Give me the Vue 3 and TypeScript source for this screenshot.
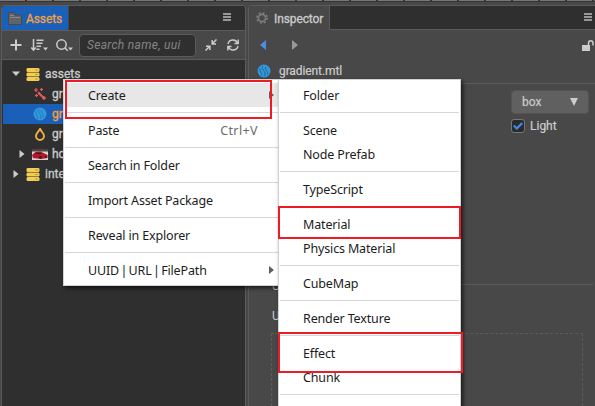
<script setup lang="ts">
interface MenuItem {
  label: string
  shortcut?: string
  submenu?: boolean
  active?: boolean
  tight?: boolean
}

const contextMenu: MenuItem[][] = [
  [{ label: 'Create', submenu: true, active: true }],
  [{ label: 'Paste', shortcut: 'Ctrl+V' }],
  [{ label: 'Search in Folder' }],
  [{ label: 'Import Asset Package' }],
  [{ label: 'Reveal in Explorer' }],
  [{ label: 'UUID | URL | FilePath', submenu: true, tight: true }],
]

const createMenu: MenuItem[][] = [
  [{ label: 'Folder' }],
  [{ label: 'Scene' }, { label: 'Node Prefab' }],
  [{ label: 'TypeScript' }],
  [{ label: 'Material' }, { label: 'Physics Material' }],
  [{ label: 'CubeMap' }],
  [{ label: 'Render Texture' }],
  [{ label: 'Effect' }, { label: 'Chunk' }],
  [{ label: '' }],
]

interface TreeRow {
  label: string
  icon: 'db' | 'wand' | 'material' | 'flame' | 'car'
  depth: number
  arrow?: 'open' | 'closed'
  selected?: boolean
}

const tree: TreeRow[] = [
  { label: 'assets', icon: 'db', depth: 0, arrow: 'open' },
  { label: 'gr', icon: 'wand', depth: 1 },
  { label: 'gr', icon: 'material', depth: 1, selected: true },
  { label: 'gr', icon: 'flame', depth: 1 },
  { label: 'ho', icon: 'car', depth: 1, arrow: 'closed' },
  { label: 'inte', icon: 'db', depth: 0, arrow: 'closed' },
]
</script>

<template>
  <div class="editor">
    <div class="strip"><i v-for="n in 23" :key="n"></i></div>
    <div class="panels">
      <section class="panel assets">
        <header class="tabs">
          <div class="tab current">
            <svg width="14" height="13" viewBox="0 0 14 13"><path d="M.5 12.500V.5h5l1.500 2.500h6.500v9.500z" fill="#5f6468" stroke="#474b4f" /><path d="M2 3.500h4M2 5.500h10" stroke="#85888b" /></svg>
            <span>Assets</span>
          </div>
          <svg class="burger" width="8" height="8" viewBox="0 0 8 8"><path d="M0 1h8M0 4h8M0 7h8" stroke="#bcbcbc" stroke-width="1.700" /></svg>
        </header>
        <div class="toolbar">
          <svg width="12" height="12" viewBox="0 0 12 12"><path d="M6 .5v11M.5 6h11" stroke="#ccc" stroke-width="2" /></svg>
          <svg class="sort" width="18" height="13" viewBox="0 0 18 13" fill="none" stroke="#ccc" stroke-width="1.500"><path d="M2.500 0v11M.2 8.500l2.300 2.600 2.300-2.600M5.500 1.200h7M5.500 4.200h6M5.500 7.200h4.500M5.500 10.200h3" /><path d="M12 8.500h5l-2.500 3z" fill="#ccc" stroke="none" /></svg>
          <svg class="find" width="18" height="13" viewBox="0 0 18 13" fill="none" stroke="#ccc" stroke-width="1.500"><circle cx="5.500" cy="5.500" r="4.700" /><path d="M8.700 8.700l3 3" /><path d="M12 8.500h5l-2.500 3z" fill="#ccc" stroke="none" /></svg>
          <div class="search">Search name, uui</div>
          <svg class="collapse" width="12" height="12" viewBox="0 0 12 12" fill="none" stroke="#ccc" stroke-width="1.500"><path d="M11.500.5l-4 4M7.200 1v4H11M.5 11.500l4-4M1 7.200h3.900V11" /></svg>
          <svg class="refresh" width="12" height="12" viewBox="0 0 12 12" fill="none" stroke="#ccc" stroke-width="1.400"><path d="M1 5a5 5 0 0 1 9.500-1M11 7a5 5 0 0 1-9.500 1M11.200.5V4.500H7.500M.8 11.500V7.500h3.700" /></svg>
        </div>
        <div class="tree">
          <div v-for="(row, i) in tree" :key="i" class="row" :class="['depth' + row.depth, { selected: row.selected }]">
            <span class="arrow">
              <svg v-if="row.arrow === 'open'" width="8" height="8" viewBox="0 0 8 8"><path d="M0 1.500h8L4 6z" fill="#ccc" /></svg>
              <svg v-else-if="row.arrow" width="8" height="8" viewBox="0 0 8 8"><path d="M1.500 0v8L6.500 4z" fill="#ccc" /></svg>
            </span>
            <svg v-if="row.icon === 'db'" class="icon" width="14" height="13" viewBox="0 0 14 13"><path d="M1.500 0h11l1 .8v2.400l-1 .8h-11l-1-.8V.8zM1.500 4.600h11l1 .8v2.300l-1 .8h-11l-1-.8V5.400zM1.500 9.100h11l1 .8v2.300l-1 .8h-11l-1-.8V9.900z" fill="#f2cd52" /><path d="M9.500 2h2M9.500 6.500h2M9.500 11h2" stroke="#a98925" /></svg>
            <svg v-else-if="row.icon === 'wand'" class="icon" width="14" height="14" viewBox="0 0 14 14" fill="none" stroke="#e45d5b"><path d="M6 6.500l5 4.500" stroke-width="2" /><circle cx="11" cy="11" r="1.800" fill="#e45d5b" stroke="none" /><path d="M3 1v4M1 3h4M8.500 1v3M7 2.500h3M5 5l2.500 2M3.500 7v3M2 8.500h3M5 7l2-1.500" stroke-width="1.200" /></svg>
            <svg v-else-if="row.icon === 'material'" class="icon" width="14" height="14" viewBox="0 0 14 14"><circle cx="7" cy="7" r="6.500" fill="#3397dc" /><path d="M6 2c-3 3.500 4 5 1.500 10M8.800 3c-1.500 3 3 4 1.500 7.500M3 4.500c-1 3.500 2.200 4 1.800 7" fill="none" stroke="#2475bd" stroke-width=".9" /></svg>
            <svg v-else-if="row.icon === 'flame'" class="icon" width="14" height="14" viewBox="0 0 14 14"><path d="M7 1.200C6.800 4 3 5.500 3 9a4 4 0 0 0 8 0C11 6 8 5 7 1.200z" fill="none" stroke="#efad47" stroke-width="1.900" /></svg>
            <svg v-else class="icon car" width="16" height="11" viewBox="0 0 16 11"><path d="M0 0h16v11H0z" fill="#d9d0ce" /><path d="M0 0h16v2.500H0z" fill="#4c4442" /><path d="M0 6l3.500-3 5-.5 4 2 3 1.500v3L9 10 1 9z" fill="#b51528" /><path d="M4 3.800h4.500l2 1.200H3z" fill="#3a2027" /><circle cx="8.500" cy="8.300" r="1.400" fill="#3b1820" /><circle cx="14" cy="7.800" r="1.100" fill="#3b1820" /></svg>
            <span>{{ row.label }}</span>
          </div>
        </div>
      </section>

      <section class="panel inspector">
        <header class="tabs">
          <div class="tab">
            <svg width="12" height="12" viewBox="0 0 12 12" fill="none" stroke="#7c7c7c"><circle cx="6" cy="6" r="3.600" stroke-width="1.600" /><circle cx="6" cy="6" r="5.100" stroke-width="1.600" stroke-dasharray="2 2" /></svg>
            <span>Inspector</span>
          </div>
          <div class="rest"><svg class="burger" width="8" height="8" viewBox="0 0 8 8"><path d="M0 1h8M0 4h8M0 7h8" stroke="#bcbcbc" stroke-width="1.700" /></svg></div>
        </header>
        <div class="history">
          <svg width="6" height="10" viewBox="0 0 6 10"><path d="M6 0v10L0 5z" fill="#4a8fe4" /></svg>
          <svg class="next" width="6" height="10" viewBox="0 0 6 10"><path d="M0 0v10l6-5z" fill="#999" /></svg>
          <svg class="lock" width="12" height="11" viewBox="0 0 12 11"><path d="M0 5h8v6H0z" fill="#ccc" /><path d="M6.500 5V3a2.200 2.200 0 0 1 4.500 0v2.500" fill="none" stroke="#ccc" stroke-width="1.500" /></svg>
        </div>
        <div class="file">
          <svg width="14" height="14" viewBox="0 0 14 14"><circle cx="7" cy="7" r="6.500" fill="#3397dc" /><path d="M6 2c-3 3.500 4 5 1.500 10M8.800 3c-1.500 3 3 4 1.500 7.500M3 4.500c-1 3.500 2.200 4 1.800 7" fill="none" stroke="#285f91" /></svg>
          <span>gradient.mtl</span>
        </div>
        <div class="preview">
          <div class="select"><span>box</span><svg width="8" height="8" viewBox="0 0 8 8"><path d="M0 0h8L4 8z" fill="#ccc" /></svg></div>
          <div class="check">
            <span class="box"><svg width="10" height="8" viewBox="0 0 10 8"><path d="M.8 3.500l3 3L9.200 1" fill="none" stroke="#4287ee" stroke-width="2.200" /></svg></span>
            <span>Light</span>
          </div>
        </div>
        <div class="section">U</div>
        <div class="section texture">U</div>
        <div class="dropzone"></div>
      </section>
    </div>

    <nav class="menu context">
      <div v-for="(group, g) in contextMenu" :key="g" class="group">
        <div v-for="item in group" :key="item.label" class="item" :class="{ active: item.active, tight: item.tight }">
          <span>{{ item.label }}</span>
          <span v-if="item.shortcut" class="shortcut">{{ item.shortcut }}</span>
          <svg v-if="item.submenu" width="5" height="8" viewBox="0 0 5 8"><path d="M0 0v8l5-4z" fill="#606060" /></svg>
        </div>
      </div>
    </nav>
    <nav class="menu create">
      <div v-for="(group, g) in createMenu" :key="g" class="group">
        <div v-for="item in group" :key="item.label" class="item"><span>{{ item.label }}</span></div>
      </div>
    </nav>
    <div class="mark mark-create"></div>
    <div class="mark mark-material"></div>
    <div class="mark mark-effect"></div>
  </div>
</template>

<style>
body { margin: 0; overflow: hidden; background: #484848; }
</style>

<style scoped>
* { box-sizing: border-box; }
svg { display: block; flex: none; }
.editor { position: relative; width: 595px; height: 406px; overflow: hidden; display: flex; flex-direction: column; background: #484848; color: #ccc; font: 12px/20px Roboto, sans-serif; }
.strip { height: 5px; flex: none; display: flex; gap: 2px; border-bottom: 3px solid #484848; background: #353535; }
.strip i { width: 25px; height: 1px; flex: none; background: #777; }
.panels { flex: 1; min-height: 0; display: flex; gap: 2px; padding-left: 1px; }
.panel { border: 1px solid #5b5b5b; border-bottom: 0; border-radius: 4px 4px 0 0; display: flex; flex-direction: column; overflow: hidden; }
.assets { width: 245px; background: #2f2f2f; }
.inspector { flex: 1; border-right: 0; border-top-right-radius: 0; background: #484848; }
.tabs { height: 24px; flex: none; display: flex; align-items: center; background: #2f2f2f; }
.tab { height: 24px; display: flex; align-items: center; letter-spacing: -.1px; -webkit-text-stroke: .3px; padding-top: 1px; }
.tab.current { width: 67px; padding-left: 6px; gap: 4px; background: #1b60b8; color: #f5a13c; border-right: 1px solid #474747; }
.assets .burger { margin: -2px 0 0 154px; }
.toolbar { height: 30px; flex: none; display: flex; align-items: center; background: #484848; border-top: 1px solid #5b5b5b; border-bottom: 1px solid #5b5b5b; padding-left: 8px; }
.sort { margin-left: 9px; }
.find { margin-left: 7px; }
.search { width: 117px; height: 23px; margin-left: 5px; border: 1px solid #5b5b5b; border-radius: 4px; background: #2f2f2f; color: #858585; font-style: italic; line-height: 21px; padding-left: 7px; letter-spacing: .3px; white-space: nowrap; }
.collapse { margin-left: 9px; }
.refresh { margin-left: 10px; }
.tree { padding-top: 4px; }
.row { height: 20px; display: flex; align-items: center; margin-left: 1px; padding-left: 9px; -webkit-text-stroke: .3px; }
.row.depth1 { padding-left: 15px; }
.row.depth1 .arrow { width: 15px; }
.row.selected { background: #1b60b8; color: #f5a13c; }
.arrow { width: 14px; }
.icon { margin-right: 5px; }
.icon.car { margin: 0 4px 0 -1px; }
.inspector .tab { width: 81px; background: #484848; padding-left: 7px; gap: 6px; border-right: 1px solid #5b5b5b; }
.inspector .tab svg { margin-top: -2px; }
.rest { flex: 1; height: 24px; border-bottom: 1px solid #5b5b5b; display: flex; justify-content: flex-end; padding: 7px 3px 0 0; }
.history { height: 30px; flex: none; display: flex; align-items: center; padding-left: 11px; }
.next { margin-left: 26px; }
.lock { margin-left: auto; margin-right: 1px; }
.file { height: 24px; flex: none; display: flex; align-items: center; gap: 8px; padding: 0 0 2px 8px; border-bottom: 1px solid #5b5b5b; letter-spacing: -.1px; -webkit-text-stroke: .2px; }
.preview { height: 201px; flex: none; padding: 6px 7px 0 262px; margin-right: 2px; border-bottom: 1px solid #5b5b5b; -webkit-text-stroke: .2px; }
.select { width: 78px; height: 24px; border-radius: 4px; background: #606060; border: 1px solid #545454; display: flex; align-items: center; justify-content: space-between; padding: 0 10px; }
.check { display: flex; align-items: center; gap: 5px; height: 14px; margin-top: 5px; white-space: nowrap; }
.box { width: 14px; height: 14px; border: 1px solid #777; border-radius: 3px; background: #2b2b2b; display: grid; place-items: center; flex: none; }
.section { height: 20px; flex: none; margin-top: -9px; padding-left: 23px; }
.section.texture { margin-top: 10px; }
.dropzone { flex: 1; margin: 7px 12px 0 22px; border: 1px dashed #5b5b5b; border-bottom: 0; }
.menu { position: absolute; background: #fff; border: 1px solid #d3d3d6; padding: 3px 1px; color: #1c1c1c; font: 12.500px/24px "Noto Sans", sans-serif; letter-spacing: -.15px; box-shadow: 2px 2px 4px rgba(0, 0, 0, .65); }
.context { left: 63px; top: 79px; width: 217px; height: 207px; }
.create { left: 278px; top: 79px; width: 183px; height: 340px; }
.group + .group::before { content: ""; display: block; height: 1px; margin: 5px 0; background: #d7d7da; }
.item { height: 24px; padding: 0 4px 0 23px; display: flex; align-items: center; white-space: nowrap; }
.item span { padding-top: 1px; }
.item.tight { word-spacing: -1.700px; }
.item.active { background: #e7e7e7; }
.item svg { margin-left: auto; }
.shortcut { margin-left: auto; margin-right: 16px; color: #6b6b6b; letter-spacing: .4px; }
.mark { position: absolute; border: 2px solid #ed1c24; }
.mark-create { left: 65px; top: 80px; width: 207px; height: 39px; }
.mark-material { left: 278px; top: 206px; width: 183px; height: 33px; }
.mark-effect { left: 278px; top: 332px; width: 185px; height: 41px; }
</style>
